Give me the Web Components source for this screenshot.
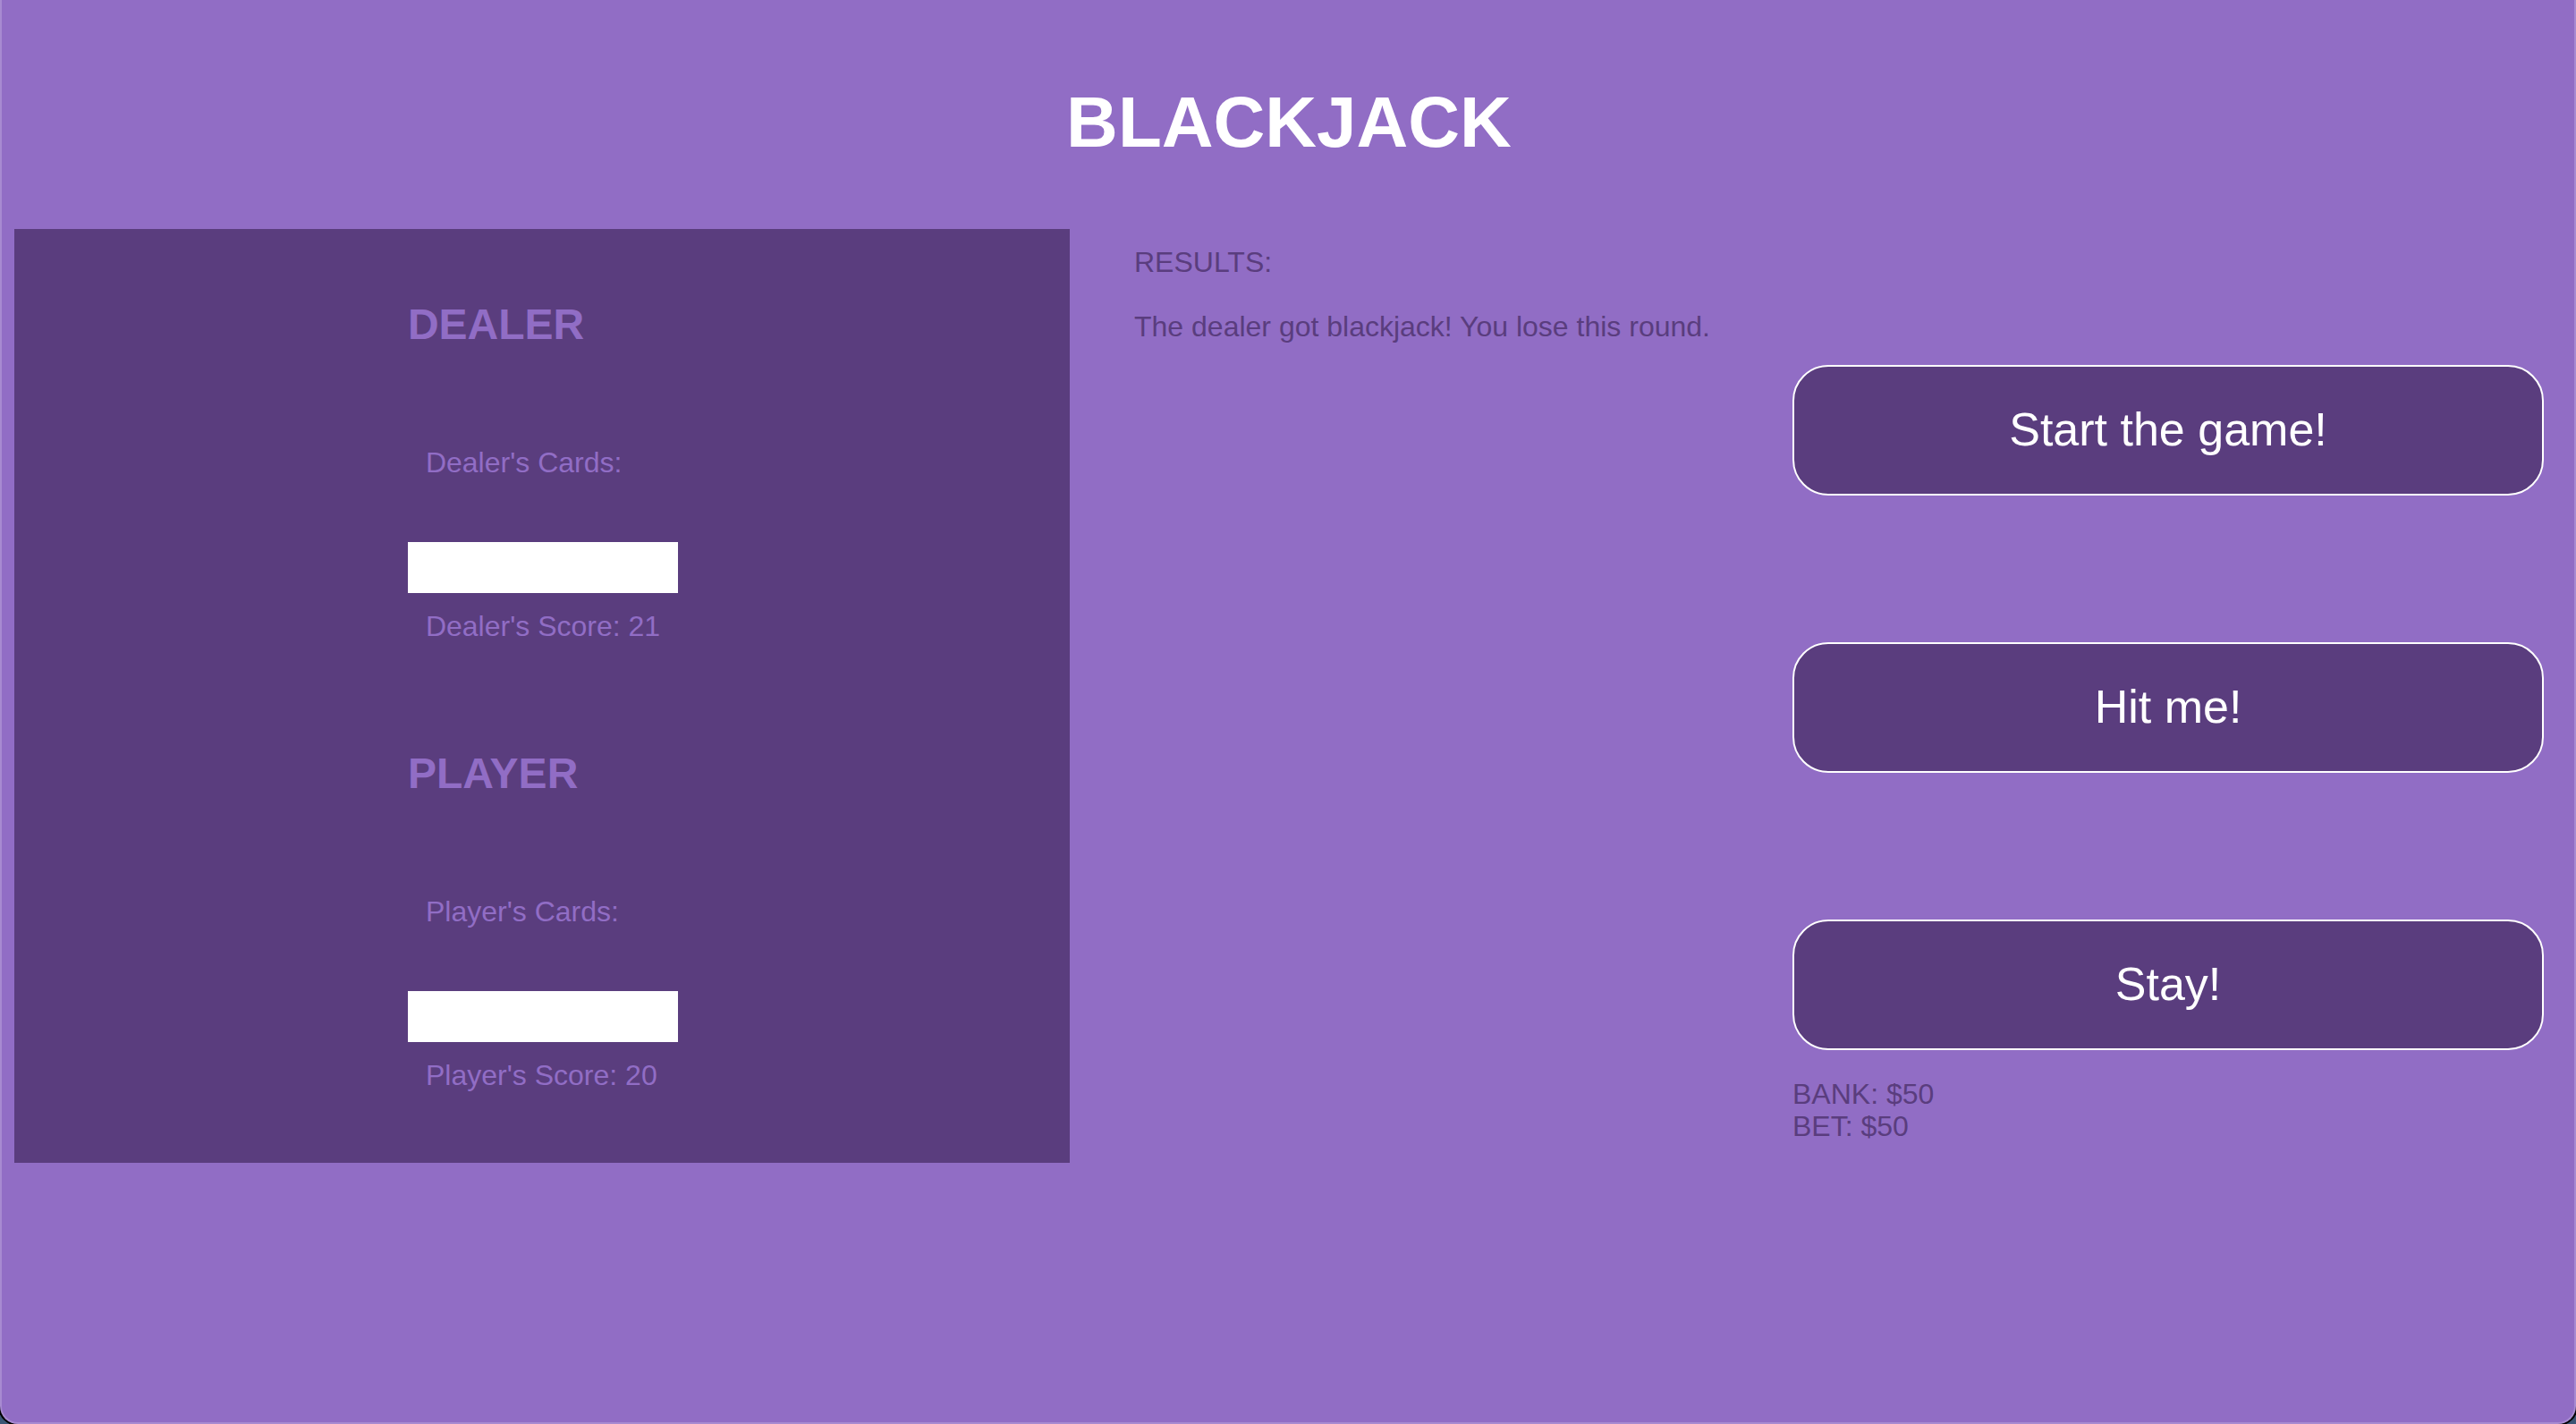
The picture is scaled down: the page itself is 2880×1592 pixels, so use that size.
<!DOCTYPE html>
<html lang="en">
<head>
<meta charset="utf-8">
<title>Blackjack</title>
<style>
  html { background: #3b5675; }
  body { margin: 0; font: 32px/36px "Liberation Sans", Arial, sans-serif; }
</style>
</head>
<body>
<blackjack-app>
  <card-table>
    <player-hand name="Dealer" score="21"></player-hand>
    <player-hand name="Player" score="20"></player-hand>
  </card-table>
  <round-results>The dealer got blackjack! You lose this round.</round-results>
  <game-controls bank="50" bet="50">
    <game-button>Start the game!</game-button>
    <game-button>Hit me!</game-button>
    <game-button>Stay!</game-button>
  </game-controls>
</blackjack-app>
<script>
  class BaseElement extends HTMLElement {
    connectedCallback() {
      if (this.shadowRoot) return;
      this.attachShadow({ mode: "open" }).innerHTML = this.render();
    }
  }

  customElements.define("blackjack-app", class extends BaseElement {
    render() {
      return `<style>
        :host { --light: #916dc5; --dark: #5a3d7e;
          display: block; box-sizing: border-box; min-height: 100vh;
          padding: 91px 34px 0 14px; background: var(--light); color: var(--dark);
          border: solid #a78ad1; border-width: 0 2px 2px;
          border-radius: 0 0 20px 20px; box-shadow: 0 0 0 2px #000; }
        h1 { margin: 0 0 73px; padding-left: 22px; font-size: 80px; line-height: 92px; color: #fff; text-align: center; }
        main { display: grid; grid-template-columns: 1180fr 664fr 840fr; column-gap: 72px; align-items: start; }
      </style>
      <header><h1>BLACKJACK</h1></header>
      <main><slot></slot></main>`;
    }
  });

  customElements.define("card-table", class extends BaseElement {
    render() {
      return `<style>
        :host { display: flex; flex-direction: column; align-items: center; gap: 119px;
          padding: 79px 0 80px 2px; background: var(--dark); color: var(--light); }
      </style><slot></slot>`;
    }
  });

  customElements.define("player-hand", class extends BaseElement {
    render() {
      const name = this.getAttribute("name");
      return `<style>
        :host { display: block; min-width: 302px; }
        h2 { margin: 0 0 108px; font-size: 48px; line-height: 56px; }
        p { margin: 0; padding: 0 20px; }
        .cards { height: 57px; margin: 71px 0 19px; background: #fff; }
      </style>
      <h2>${name.toUpperCase()}</h2>
      <p>${name}'s Cards:</p>
      <div class="cards"></div>
      <p>${name}'s Score: ${this.getAttribute("score")}</p>`;
    }
  });

  customElements.define("round-results", class extends BaseElement {
    render() {
      return `<style>
        :host { display: block; padding-top: 19px; }
        p { margin: 0 0 36px; }
      </style>
      <p>RESULTS:</p>
      <p><slot></slot></p>`;
    }
  });

  customElements.define("game-controls", class extends BaseElement {
    render() {
      return `<style>
        :host { display: block; padding-top: 152px; }
        .buttons { display: flex; flex-direction: column; gap: 164px; margin-bottom: 31px; }
      </style>
      <div class="buttons"><slot></slot></div>
      <div>BANK: $${this.getAttribute("bank")}</div>
      <div>BET: $${this.getAttribute("bet")}</div>`;
    }
  });

  customElements.define("game-button", class extends BaseElement {
    render() {
      return `<style>
        :host { display: block; }
        button { display: block; width: 100%; padding: 40px 20px 42px; font: 52px/60px "Liberation Sans", Arial, sans-serif;
          color: #fff; background: var(--dark); border: 2px solid #fff; border-radius: 40px; cursor: pointer; }
      </style>
      <button type="button"><slot></slot></button>`;
    }
  });
</script>
</body>
</html>
